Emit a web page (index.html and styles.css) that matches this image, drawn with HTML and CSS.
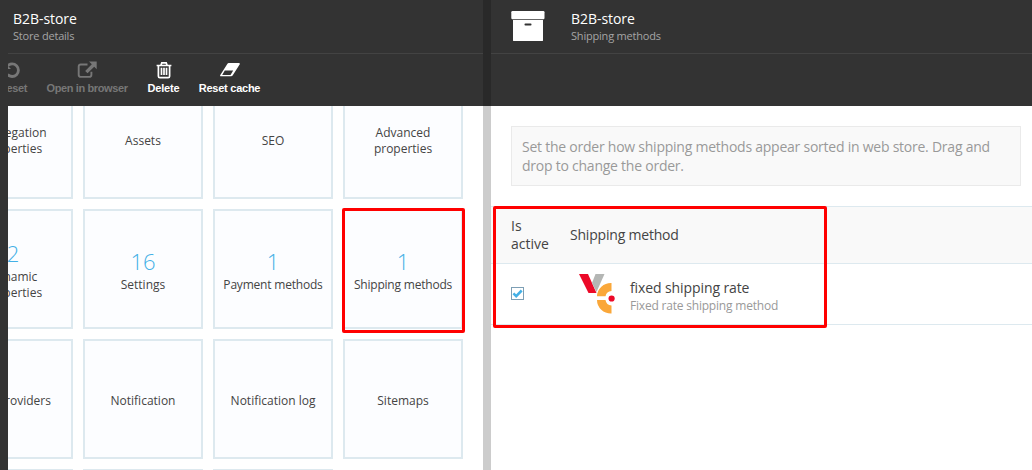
FILE: index.html
```html
<!DOCTYPE html>
<html lang="en">
<head>
<meta charset="utf-8">
<title>B2B-store</title>
<link rel="stylesheet" href="styles.css">
</head>
<body>
<div class="app">
  <section class="blade blade-store">
    <header class="blade-head">
      <h1 class="title">B2B-store</h1>
      <p class="subtitle">Store details</p>
    </header>
    <nav class="toolbar">
      <div class="tool tool-reset disabled">
        <svg class="icon" width="16" height="18" viewBox="0 0 16 18"><path d="M2.600 4.800A6.300 6.300 0 1 1 2.600 13.600" fill="none" stroke="currentColor" stroke-width="2.800"/><path d="M0 2v6h6z" fill="currentColor"/></svg>
        <span>Reset</span>
      </div>
      <div class="tool tool-open disabled">
        <svg class="icon" width="20" height="18" viewBox="0 0 20 18"><path d="M10.500 3.500H3.800Q1.700 3.500 1.700 5.600v8.100q0 2.200 2.200 2.200h8.300q2.200 0 2.200-2.200v-3" fill="none" stroke="currentColor" stroke-width="1.900"/><path d="M12 .5H19.700v7.700l-2.500-2.500-6.700 6.600-2.300-2.300 6.600-6.700z" fill="currentColor"/></svg>
        <span>Open in browser</span>
      </div>
      <div class="tool tool-delete">
        <svg class="icon" width="16" height="18" viewBox="0 0 16 18"><path d="M.6 4.500h14.800M4.900 4.300l.9-2.400h4.400l.9 2.400M2.400 5v10.200q0 1.500 1.500 1.500h8.200q1.500 0 1.500-1.500V5M5.500 6.800v7.200M8 6.800v7.200M10.500 6.800v7.200" fill="none" stroke="currentColor" stroke-width="1.700"/></svg>
        <span>Delete</span>
      </div>
      <div class="tool tool-cache">
        <svg class="icon" width="20" height="18" viewBox="0 0 20 18"><path fill-rule="evenodd" d="M8.800 2h9.900q1.800 0 .9 1.500L12.800 14.300q-.6 1-1.800 1H1.200q-1.700 0-.9-1.400L7.300 2.900Q7.800 2 8.800 2zM4.800 9.600 2.200 13.900H10.500L13.200 9.600z" fill="currentColor"/></svg>
        <span>Reset cache</span>
      </div>
    </nav>
    <div class="tiles-view">
      <div class="tiles">
        <div class="tile"><span>Aggregation properties</span></div>
        <div class="tile"><span>Assets</span></div>
        <div class="tile"><span>SEO</span></div>
        <div class="tile"><span>Advanced properties</span></div>
        <div class="tile"><b class="count">2</b><span>Dynamic properties</span></div>
        <div class="tile"><b class="count">16</b><span>Settings</span></div>
        <div class="tile"><b class="count">1</b><span class="long">Payment methods</span></div>
        <div class="tile marked"><b class="count">1</b><span class="long">Shipping methods</span></div>
        <div class="tile"><span>Tax providers</span></div>
        <div class="tile"><span>Notification</span></div>
        <div class="tile"><span>Notification log</span></div>
        <div class="tile"><span>Sitemaps</span></div>
        <div class="tile"></div>
        <div class="tile"></div>
        <div class="tile"></div>
      </div>
    </div>
  </section>
  <section class="blade blade-shipping">
    <header class="blade-head with-icon">
      <svg class="box-icon" width="34" height="32" viewBox="0 0 34 32"><rect x=".3" y="1" width="33.200" height="8.200" rx="1.200" fill="#fff"/><path d="M2 10h30v20.600q0 .4-.4.400H2.400q-.4 0-.4-.400z" fill="#fff"/><rect x="13.500" y="13.600" width="7" height="2" rx=".8" fill="#333"/></svg>
      <div>
        <h1 class="title">B2B-store</h1>
        <p class="subtitle">Shipping methods</p>
      </div>
    </header>
    <div class="toolbar"></div>
    <p class="hint">Set the order how shipping methods appear sorted in web store. Drag and<br>drop to change the order.</p>
    <div class="table">
      <div class="row head"><span class="cell-active">Is<br>active</span><span class="cell-method">Shipping method</span></div>
      <div class="row item">
        <span class="cell-active"><svg class="check" width="13" height="13" viewBox="0 0 13 13"><rect x=".5" y=".5" width="12" height="12" fill="#fff" stroke="#7d9fb5"/><path d="M2.400 6.300 5.200 9.100 10.700 3.500" fill="none" stroke="#43b0e6" stroke-width="2.500"/></svg></span>
        <svg class="logo" width="40" height="42" viewBox="0 0 40 42"><path d="M0 1h9l8.500 19H9.500z" fill="#ec0928"/><path d="M16.500 1H25.500L17.500 19 13 10z" fill="#b4b6b4"/><path d="M32.500 10A14 13.500 0 0 0 18 23.200h8.500A6.500 6.500 0 0 1 32.500 18z" fill="#faa739"/><path d="M18 27h8.500a6.500 6.500 0 0 0 6 5.500V40.500A14 13.500 0 0 1 18 27z" fill="#faa739"/><circle cx="32.600" cy="25.500" r="3.100" fill="#ec0928"/></svg>
        <div class="method"><span class="name">fixed shipping rate</span><span class="desc">Fixed rate shipping method</span></div>
      </div>
      <div class="marker"></div>
    </div>
  </section>
</div>
</body>
</html>
```
FILE: styles.css
```css
* { box-sizing: border-box; }
body { margin: 0; font-family: "Open Sans", "Noto Sans", sans-serif; color: #444; background: #333; }
.app { display: flex; width: 1032px; height: 470px; overflow: hidden; padding-left: 8px; }
.blade { display: flex; flex-direction: column; background: #fff; }
.blade-store { width: 483px; border-right: 8px solid #ccc; border-image: linear-gradient(#292929 106px, #ccc 106px) 0 8 0 0; }
.blade-shipping { width: 541px; }
.blade-head { height: 53px; flex: none; background: #333; padding: 10px 0 0 5px; }
.with-icon { display: flex; gap: 26px; padding-left: 20px; }
.title { margin: 0; font-size: 14px; line-height: 18px; font-weight: 400; color: #fff; letter-spacing: -.05px; }
.subtitle { margin: 0; font-size: 11px; line-height: 16px; color: #a5a5a5; letter-spacing: -.2px; }
.toolbar { height: 53px; flex: none; background: #333; border-top: 1px solid #434343; display: flex; overflow: hidden; color: #fff; }
.tool { flex: none; display: flex; flex-direction: column; align-items: center; padding-top: 7px; font: bold 11px/13px "Liberation Sans", Arial, sans-serif; letter-spacing: -.38px; white-space: nowrap; }
.tool-delete { letter-spacing: -.15px; }
.tool-cache { letter-spacing: -.25px; }
.tool span { margin-top: 3px; }
.disabled { color: #777; }
.tool-reset { width: 30px; margin-left: -10px; }
.tool-open { width: 82px; margin-left: 18px; }
.tool-delete { width: 33px; margin-left: 19px; }
.tool-cache { width: 63px; margin-left: 18px; }
.tiles-view { flex: 1; min-height: 0; overflow: hidden; }
.tiles { display: grid; grid-template-columns: repeat(4, 120px); grid-auto-rows: 120px; gap: 10px; margin: -27px 0 0 -55px; }
.tile { border: 2px solid #dde9ef; background: #fcfdff; display: flex; flex-direction: column; align-items: center; justify-content: center; text-align: center; font-size: 12px; line-height: 16px; padding: 3px 8px 0; position: relative; }
.tile .long { white-space: nowrap; letter-spacing: -.2px; }
.count { font-size: 22px; line-height: 28px; font-weight: 300; color: #43b0e6; margin-top: -2px; padding-bottom: 2px; }
.marked::after { content: ""; position: absolute; inset: -3px -4px -6px -3px; border: 3px solid #f00; border-radius: 2px; }
.hint { margin: 20px 11px 20px 20px; height: 60px; flex: none; border: 1px solid #eaeaea; background: #f9f9f9; color: #999; font-size: 14px; line-height: 19px; padding: 10px 10px; letter-spacing: -.24px; white-space: nowrap; }
.table { position: relative; border-top: 1px solid #dde9ef; font-size: 14px; }
.row { display: flex; align-items: center; padding-left: 20px; border-bottom: 1px solid #dde9ef; }
.head { height: 57px; background: #f9f9f9; line-height: 18px; }
.cell-method { letter-spacing: -.2px; }
.item { height: 61px; }
.cell-active { width: 59px; flex: none; }
.check { display: block; position: relative; top: -1px; }
.logo { margin: 0 11px 0 9px; }
.method { display: flex; flex-direction: column; padding: 4px 0 0; }
.name { line-height: 18px; letter-spacing: -.1px; }
.desc { font-size: 12px; line-height: 17px; color: #999; letter-spacing: -.2px; }
.marker { position: absolute; left: 2px; top: -1px; width: 334px; height: 122px; border: 3px solid #f00; border-radius: 2px; }
```
